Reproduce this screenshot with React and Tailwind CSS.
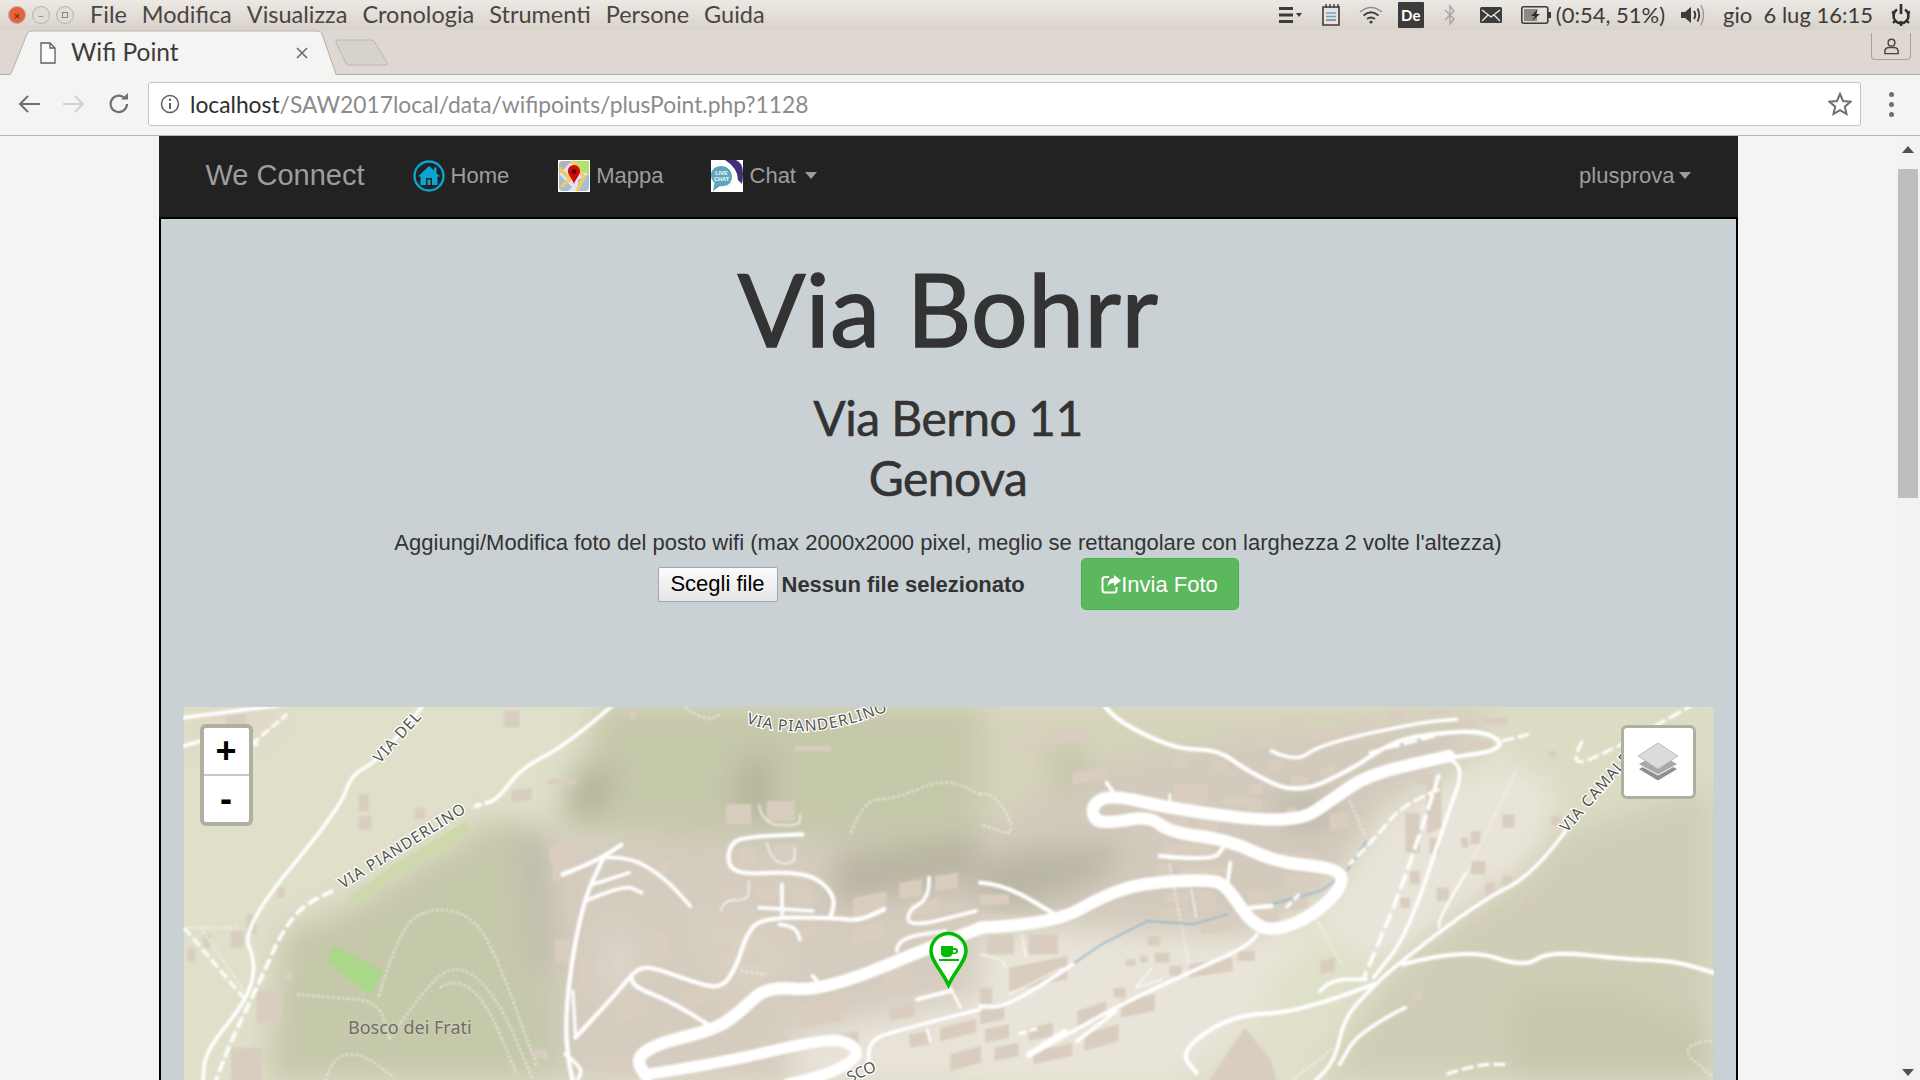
import React from 'react';

const ui = { fontFamily: 'Lato, sans-serif' };
const arial = { fontFamily: '"Liberation Sans", Arial, sans-serif' };
const comic = { fontFamily: 'Lato, sans-serif' };

// zoom-crop coordinates of the two map halves
const leftHalf = 'translate(180 700) scale(0.5102 0.33333)';
const rightHalf = 'translate(980 700) scale(0.4859 0.33333)';

const leftTerrain = [
  ['#c6c8aa', '830,0 1568,0 1568,450 1300,440 700,380 620,350 400,550 330,620 200,690 170,1140 760,1140 720,430'],
  ['#d4ccbf', '720,420 1100,400 1568,450 1568,1140 740,1140'],
  ['#b3b49a', '760,230 860,190 825,350 765,345'],
  ['#b3b49a', '1090,200 1160,140 1160,350 1090,340'],
  ['#b9b5a3', '1280,460 1568,400 1568,540 1280,620'],
  ['#bfbbac', '660,380 720,420 740,800 690,800'],
  ['#dfd8cc', '840,700 880,710 890,860 830,860'],
  ['#e8e2d8', '1200,1000 1568,880 1568,1140 1200,1140'],
  ['#d9d2c3', '1020,650 1180,700 1180,860 1080,880'],
  ['#e0d6c4', '8,60 60,20 210,20 170,110 40,160'],
];

const rightTerrain = [
  ['#dcdbc3', '1050,0 1510,0 1510,260 1190,420 1100,190'],
  ['#cfcdb5', '1200,400 1510,250 1510,1140 700,1140 850,800'],
  ['#c8c6ac', '1100,880 1300,870 1510,1000 1510,1140 1100,1140'],
  ['#d5d3ba', '0,0 1100,0 1050,60 600,100 200,200 0,400'],
  ['#d2cabd', '0,400 200,200 600,100 1050,60 1000,170 830,320 740,520 560,700 180,680 0,680'],
  ['#b9b5a4', '0,480 100,440 300,430 250,530 100,620 0,600'],
  ['#bdb9a9', '590,300 680,270 760,340 660,400'],
  ['#e9e4d9', '0,720 180,700 560,720 700,650 850,330 1100,190 1190,260 1130,500 820,790 600,930 400,1140 0,1140'],
  ['#dfe0c8', '560,900 700,680 820,790 650,920'],
  ['#c5c7a9', '140,120 210,120 220,260 150,280'],
];

const leftBuildings = [
  [1070,310,50,60,0],[1150,300,55,60,0],[1095,440,35,60,0],[1165,430,40,55,0],[1060,555,50,40,0],[1130,555,50,40,0],[1200,560,40,50,0],
  [1065,630,35,45,0],[1155,680,35,45,0],[1220,675,30,30,0],[1050,720,35,35,0],[1105,755,35,40,0],[1320,590,65,70,-20],[1410,545,45,50,-10],
  [1480,525,45,45,-10],[1320,680,60,50,-20],[1430,610,60,40,-20],[925,690,30,80,0],[730,480,40,60,-10],[735,715,30,70,0],[780,760,25,100,0],
  [860,910,55,50,-20],[980,870,50,50,-15],[1060,910,40,50,-20],[940,990,60,40,-15],[1215,910,80,70,-20],[1290,1000,40,40,-10],[1390,920,50,40,-15],
  [1480,850,45,40,-15],[1430,1000,40,40,-10],[1490,980,70,40,-25],[1510,1060,60,50,-25],[1090,1060,25,60,0],[1180,950,20,30,0],[850,1060,40,60,0],
  [725,435,60,50,-20],[1130,1020,60,50,-20],[635,30,30,50,0],[880,30,15,20,0],[720,235,55,15,0],[650,270,40,35,-10],[350,280,20,50,0],[350,345,25,40,0],
  [460,320,20,35,0],[130,640,20,60,0],[190,560,15,30,0],[100,690,25,50,0],[205,810,15,30,0],[150,870,50,100,-10],[100,1040,60,100,0],[15,740,15,40,0],
  [45,700,15,40,0],[695,1045,25,30,0],[1205,135,70,15,0],[90,40,40,60,0],[940,480,20,40,0],[1380,810,50,60,-15],
];

const rightBuildings = [
  [95,60,15,25,0],[140,90,75,40,-10],[80,125,30,30,0],[190,215,70,35,-15],[400,170,25,30,0],[480,180,30,30,0],[570,110,30,30,0],[595,180,30,25,0],
  [555,250,25,30,0],[640,225,35,30,0],[700,200,30,25,-5],[680,90,70,30,-15],[770,70,50,25,-10],[840,30,35,25,0],[920,25,50,20,0],[1035,50,50,20,0],
  [995,60,30,20,0],[985,120,70,30,-5],[400,250,70,60,0],[500,285,50,30,0],[550,295,30,30,0],[380,350,50,30,0],[450,350,40,40,0],[630,320,20,50,0],
  [720,340,40,50,-10],[380,425,100,30,5],[365,490,30,30,0],[410,495,100,30,0],[620,455,70,20,0],[630,520,70,40,0],[550,570,50,40,0],[375,625,55,40,-10],
  [380,575,50,30,0],[445,570,40,60,0],[455,650,70,50,-15],[560,630,55,40,0],[635,590,40,40,-10],[875,335,30,120,0],[920,250,30,150,-20],[925,410,20,50,0],
  [900,220,30,30,0],[885,510,20,40,0],[865,590,20,30,0],[1075,340,25,40,0],[1010,390,20,40,0],[990,410,15,30,0],[1010,480,30,40,0],[1040,545,20,40,0],
  [1075,525,20,30,0],[940,560,25,40,0],[1175,345,20,30,0],[1170,150,15,20,0],[1110,580,10,30,0],[1010,640,20,30,0],[700,780,30,40,-10],[890,870,20,30,0],
  [0,580,60,30,0],[0,640,130,20,0],[15,700,55,60,0],[100,700,60,60,0],[345,705,25,30,0],[300,775,20,20,0],[330,765,15,20,0],[360,755,30,30,0],[390,795,25,30,0],
  [430,790,90,40,-20],[530,750,35,30,0],[60,800,120,70,-35],[0,860,25,50,0],[0,930,50,40,-15],[10,985,50,40,-15],[30,1040,50,40,-15],[100,980,50,40,-15],
  [110,1050,80,40,-25],[200,930,60,50,-30],[215,1000,70,50,-30],[290,900,70,50,-20],[275,860,25,30,0],
];

// [path, width, dash?]
const leftRoads = [
  ['M850 10 L760 130 L670 200 L630 280 L612 300', 3],
  ['M612 300 L570 320', 3, '8 3'],
  ['M300 570 L250 600 L200 690 L160 830 L100 1020 L70 1140', 3, '12 4'],
  ['M478 10 L390 180 L335 220 L315 320 L120 680 L150 790 L130 900 L50 1050 L45 1140', 3],
  ['M8 50 L210 10', 3],
  ['M8 135 L100 90 L150 130', 3],
  ['M140 130 L210 40', 2.5, '10 3'],
  ['M8 680 L130 900', 2.5, '10 4'],
  ['M770 1140 L755 1050 L760 850 L790 600 L830 470', 3.5],
  ['M750 520 L810 485 L865 432', 3.5],
  ['M830 470 L880 465 L950 530 L1000 615', 3],
  ['M795 600 L870 550 L905 575', 3],
  ['M810 550 L880 515', 3],
  ['M770 870 L775 1000', 2.5],
  ['M775 1010 L860 870 L890 810 L920 795 L1000 840 L1060 865 L1090 800 L1110 700 L1140 650 L1280 650 L1330 660 L1380 625', 3.5],
  ['M755 1060 L790 1100 L780 1135', 3],
  ['M1220 400 L1100 405 L1075 440 L1075 500 L1110 520 L1190 512 L1250 530 L1285 590 L1275 650', 3.5],
  ['M1135 310 L1140 370 L1215 375 L1215 340', 1.2],
  ['M1180 550 L1180 640 M1135 620 L1240 630', 3],
  ['M1060 630 L1065 595 L1115 600 L1115 540', 1.2],
  ['M1150 425 L1160 485 L1205 490 L1205 440', 1.2],
  ['M1175 670 L1205 675 L1215 715', 3],
  ['M1568 682 L1500 720 L1260 872 L1150 855 L1100 930 L1050 985 L930 1030 L893 1075 L915 1128', 10],
  ['M915 1120 L1050 1090 L1270 1010 L1320 1030 L1330 1070 L1270 1120 L1190 1150', 9],
  ['M1240 825 L1260 860', 3],
  ['M885 830 L885 855 L960 900 L1040 975', 3.5],
  ['M1468 530 L1470 590 L1425 630 L1430 680 L1560 630', 3],
  ['M1405 750 L1405 712 L1500 690', 3],
  ['M1445 895 L1510 870', 3.5],
  ['M1510 860 L1530 920', 2],
  ['M1568 925 L1400 990 L1350 1020 L1350 1100', 3],
  ['M1465 985 L1470 1020', 2],
];

const leftTrails = [
  'M1315 395 L1340 295 L1400 295 L1500 230 L1568 280',
  'M390 885 L430 680 L490 620 L570 640 L620 760 L700 1100',
  'M410 1015 L470 880 L540 780 L620 880 L690 1130',
  'M510 860 L540 830 L600 900 L660 1120',
  'M230 880 L300 890 L390 900 L410 1015',
  'M285 1140 L300 1060 L360 1060 L420 1130',
  'M8 680 L110 680',
  'M40 680 L130 880',
  'M990 20 L1030 60 L1060 40',
  'M1100 810 L1150 820',
];

const rightRoads = [
  ['M255 10 L270 50 L400 145 L490 145 L550 210 L650 280 L760 210 L850 120 L940 95 L1030 90 L1075 120 L1060 150 L970 170', 3.5],
  ['M0 680 L150 670 L260 580 L340 545 L480 535 L510 560 L560 670 L610 690 L690 640 L750 550 L735 500 L610 485 L510 415 L390 395 L350 345 L270 365 L235 360 L230 310 L270 280 L400 325 L650 370 L730 290 L800 220 L965 165', 10],
  ['M370 465 L480 480 L500 440', 3.5],
  ['M515 485 L510 545', 3],
  ['M260 245 L275 275', 3],
  ['M390 280 L392 310', 2],
  ['M0 545 L50 550 L160 645', 3.5],
  ['M545 622 L600 615', 3.5],
  ['M570 700 L560 730 L430 815 L290 910 L100 1065', 3],
  ['M190 790 L60 920 L0 915', 3],
  ['M965 175 L1000 190 L960 350 L880 700 L810 830', 3],
  ['M1205 390 L1140 520 L1030 600 L850 800 L800 870 L750 950 L730 1080 L690 1140', 3],
  ['M870 790 L1000 740 L1120 800 L1170 750 L1330 775 L1430 780 L1510 815', 3.5],
  ['M810 850 L660 935 L520 940 L410 1050 L445 1115', 3.5],
  ['M700 870 L720 835 L795 835', 3],
  ['M1000 515 L945 650 L945 680', 2],
  ['M875 920 L780 990 L740 1090', 3],
  ['M600 150 L650 185 L700 130 L900 65 L980 55', 3],
  ['M100 1060 L175 990', 4],
  ['M200 1020 L280 930', 3],
  ['M320 860 L355 800 M320 860 L375 835', 1.2],
  ['M60 880 L170 800', 1.2],
  ['M85 700 L95 770 M0 760 L50 775 L50 800', 1.2],
  ['M435 565 L445 650', 1.2],
];

const rightDashed = [
  ['M945 265 L870 310 L820 400 L760 490', 2.5, '12 4'],
  ['M945 220 L880 520 L790 830', 3, '16 5'],
  ['M800 155 L950 100', 2.5, '14 4'],
  ['M1075 120 L1130 100', 2.5, '12 4'],
  ['M1240 120 L1205 210 L1320 130', 2.5, '12 4'],
  ['M1320 130 L1470 10', 2.5, '14 4'],
  ['M630 620 L660 575', 2.5, '8 3'],
  ['M960 1120 L1020 1090 L1090 1090', 2.5, '12 4'],
  ['M80 1000 L120 980', 2.5, '8 3'],
];

const rightTrails = [
  'M1105 205 L1000 520',
  'M760 300 L795 410',
  'M690 650 L745 790',
  'M1505 1020 L1430 1030 L1510 1130',
  'M0 280 L30 270 L80 410 L0 370',
  'M390 490 L430 790',
  'M640 1140 L730 1040',
];

const blue = ['M795 420 L755 510', 'M735 535 L700 570 L600 610', 'M510 640 L440 670 L345 660 L250 730 L190 790'];

// rounds the corners of a traced polyline
function smooth(d) {
  return d.split('M').filter(Boolean).map((part) => {
    const n = part.replace(/L/g, ' ').trim().split(/\s+/).map(Number);
    const pts = [];
    for (let i = 0; i < n.length; i += 2) pts.push([n[i], n[i + 1]]);
    let out = `M${pts[0][0]} ${pts[0][1]}`;
    for (let i = 1; i < pts.length - 1; i++) {
      const mx = (pts[i][0] + pts[i + 1][0]) / 2;
      const my = (pts[i][1] + pts[i + 1][1]) / 2;
      out += ` Q${pts[i][0]} ${pts[i][1]} ${mx} ${my}`;
    }
    const last = pts[pts.length - 1];
    return `${out} L${last[0]} ${last[1]}`;
  }).join(' ');
}

function Buildings({ list }) {
  return list.map(([x, y, w, h, d], i) => (
    <polygon key={i} points={`${x},${y} ${x + w},${y + d} ${x + w},${y + d + h} ${x},${y + h}`} fill="#d9cdbf" />
  ));
}

function Roads({ list }) {
  return list.map(([d, w, dash], i) => (
    <path key={i} d={smooth(d)} fill="none" stroke="#fff" strokeWidth={w > 1.5 ? w * 1.25 : w} strokeDasharray={dash} strokeLinejoin="round" strokeLinecap={dash ? 'butt' : 'round'} vectorEffect="non-scaling-stroke" />
  ));
}

function Trails({ list }) {
  return list.map((d, i) => (
    <path key={i} d={smooth(d)} fill="none" stroke="#fff" strokeWidth="1.7" strokeDasharray="2 3" vectorEffect="non-scaling-stroke" />
  ));
}

function MapArt() {
  const label = { fontFamily: '"Noto Sans", sans-serif', fill: '#55564f', stroke: '#fff', strokeWidth: 2.5, paintOrder: 'stroke' };
  return (
    <svg viewBox="184 706 1529 374" className="block w-full h-full">
      <defs>
        <filter id="soft" x="-10%" y="-10%" width="120%" height="120%"><feGaussianBlur stdDeviation="14" /></filter>
        <filter id="tile" x="-2%" y="-2%" width="104%" height="104%"><feGaussianBlur stdDeviation="0.9" /></filter>
        <path id="topLabel" d="M746 722 Q810 744 892 708" />
      </defs>
      <rect x="184" y="706" width="1529" height="374" fill="#dfdfca" />
      <g filter="url(#soft)">
        <g transform={leftHalf}>{leftTerrain.map(([c, p], i) => <polygon key={i} points={p} fill={c} />)}</g>
        <g transform={rightHalf}>{rightTerrain.map(([c, p], i) => <polygon key={i} points={p} fill={c} />)}</g>
      </g>
      <g filter="url(#tile)">
        <g transform={leftHalf}>
          <polygon points="330,590 420,490 560,360 570,400 430,520 350,610" fill="#cdd8ab" />
          <polygon points="300,735 398,810 374,882 289,783" fill="#a8d888" />
          <Buildings list={leftBuildings} />
          <Trails list={leftTrails} />
          <Roads list={leftRoads} />
        </g>
        <g transform={rightHalf}>
          <Buildings list={rightBuildings} />
          <polygon points="470,1140 545,980 600,1080 610,1140" fill="#d9cdbf" />
          <Trails list={rightTrails} />
          {blue.map((d) => <path key={d} d={d} fill="none" stroke="#8db4cc" strokeWidth="1.5" vectorEffect="non-scaling-stroke" />)}
          <Roads list={rightRoads} />
          <Roads list={rightDashed} />
        </g>
      </g>
      <text x="0" y="0" fontSize="15.5" letterSpacing="1" style={label} transform="translate(343 888) rotate(-32)">VIA PIANDERLINO</text>
      <text x="0" y="0" fontSize="15.5" letterSpacing="1" style={label} transform="translate(380 763) rotate(-48)">VIA DEL</text>
      <text fontSize="15.5" letterSpacing="1" style={label}><textPath href="#topLabel">VIA PIANDERLINO</textPath></text>
      <text x="0" y="0" fontSize="15.5" letterSpacing="1" style={label} transform="translate(1567 832) rotate(-49)">VIA CAMALDOLI</text>
      <text x="0" y="0" fontSize="15.5" style={label} transform="translate(850 1082) rotate(-25)">SCO</text>
      <text x="348" y="1033" fontSize="18" style={{ ...label, fill: '#6e6e66', strokeWidth: 2, stroke: '#cfd0b8' }}>Bosco dei Frati</text>
      <path d="M948.5 984 C942 970 931 960 931 950 A17.5 17.5 0 0 1 966 950 C966 960 955 970 948.5 984Z" fill="#fff" stroke="#00bb00" strokeWidth="3.5" />
      <path d="M941 945 H953 V947 H955 Q958 947 958 950 Q958 953 955 953 H952.5 Q951 956 949 956 H945 Q942 956 941 953Z M953 949 V951.5 H955 Q956 951.5 956 950 Q956 949 955 949Z" fill="#00bb00" fillRule="evenodd" />
      <rect x="939" y="958" width="20" height="2" fill="#00bb00" />
    </svg>
  );
}

function HomeIcon() {
  return (
    <svg viewBox="0 0 32 32" className="w-[32px] h-[32px]">
      <circle cx="16" cy="16" r="14.5" fill="none" stroke="#0aa5d3" strokeWidth="2.4" />
      <path d="M16 6 L21 10.5 V7.5 H23.5 V13 L27 16.5 H24.5 V25 H7.5 V16.5 H5Z" fill="#0aa5d3" />
      <rect x="13" y="18" width="6" height="7" fill="#1f1f1f" />
      <rect x="14.5" y="19.5" width="3" height="5.5" fill="#0aa5d3" />
    </svg>
  );
}

function MapIcon() {
  return (
    <svg viewBox="0 0 32 32" className="w-[32px] h-[32px]">
      <rect width="32" height="32" fill="#fff" />
      <rect x="1" y="1" width="30" height="30" rx="4" fill="#e4e5e8" />
      <path d="M1 5 Q1 1 5 1 H14 L1 14Z" fill="#b3b3b3" />
      <path d="M16 1 H31 V14 L24 12Z" fill="#b5e06a" />
      <path d="M1 14 L14 27 L10 31 H5 Q1 31 1 27Z M20 20 L31 14 V27 Q31 31 27 31 H20Z" fill="#a3bfd3" />
      <path d="M1 8 L12 19 L3 27 M14 1 L26 17 L19 31" fill="none" stroke="#f3c867" strokeWidth="3.5" />
      <path d="M16 5 C11.5 5 9.5 9 10 12 C10.7 16 15 20 16 24 C17 20 21.3 16 22 12 C22.5 9 20.5 5 16 5Z" fill="#cf0a0a" />
      <circle cx="16" cy="11.5" r="2.2" fill="#5a0000" />
    </svg>
  );
}

function ChatIcon() {
  return (
    <svg viewBox="0 0 32 32" className="w-[32px] h-[32px]">
      <rect width="32" height="32" fill="#fff" />
      <path d="M14 0 H25 Q32 3 32 13 Q32 19 31 24 L27 20 Q27 8 14 0Z" fill="#3f3079" />
      <path d="M10 6 C16 6 21 10 21 17 C21 24 15 27 9 26 L2 31 L3.5 23 C0.5 20 0 17 0 15 C0 10 4 6 10 6Z" fill="#5fa6bd" />
      <text x="10.5" y="14.5" textAnchor="middle" fontSize="5.6" fontWeight="700" fill="#fff" style={arial}>LIVE</text>
      <text x="10.5" y="21" textAnchor="middle" fontSize="5.6" fontWeight="700" fill="#fff" style={arial}>CHAT</text>
    </svg>
  );
}

function Caret() {
  return <span className="inline-block w-0 h-0 border-l-[6px] border-r-[6px] border-t-[7px] border-l-transparent border-r-transparent border-t-[#9d9d9d]" />;
}

function Dot({ color, children }) {
  return (
    <span className="w-[18px] h-[18px] rounded-full border border-[#b9b3ab] flex items-center justify-center text-[11px] leading-none" style={{ background: color }}>
      {children}
    </span>
  );
}

function StatusIcons() {
  return (
    <div className="flex items-center text-[#3c3c3c]">
      <svg viewBox="0 0 23 18" className="w-[23px] h-[18px]" fill="#3c3c3c">
        <rect y="1" width="14" height="3" /><rect y="7.5" width="14" height="3" /><rect y="14" width="14" height="3" /><path d="M17 7 H23 L20 11Z" />
      </svg>
      <svg viewBox="0 0 22 24" className="w-[22px] h-[24px] ml-[18px]" fill="none">
        <path d="M3 4 H19 V22 H3Z" fill="#e8e4dd" stroke="#3c3c3c" strokeWidth="1.6" />
        <path d="M6 1 V5 M10 1 V5 M14 1 V5 M18 1 V5" stroke="#3c3c3c" strokeWidth="1.4" />
        <path d="M6 10 H16 M6 13.5 H16" stroke="#5fa8cf" strokeWidth="1.6" />
        <path d="M6 17 H16" stroke="#777" strokeWidth="1.4" />
      </svg>
      <svg viewBox="0 0 24 18" className="w-[24px] h-[18px] ml-[17px]" fill="none" stroke="#3c3c3c">
        <path d="M1 6 Q12 -3 23 6" strokeWidth="1.4" stroke="#8c8c8c" />
        <path d="M4.5 9.5 Q12 3 19.5 9.5" strokeWidth="1.8" />
        <path d="M8 13 Q12 10 16 13" strokeWidth="1.8" />
        <circle cx="12" cy="16" r="1.6" fill="#3c3c3c" stroke="none" />
      </svg>
      <span className="ml-[15px] w-[26px] h-[26px] bg-[#3b3b3b] text-white text-[15px] font-bold flex items-center justify-center rounded-[1px]">De</span>
      <svg viewBox="0 0 12 24" className="w-[12px] h-[24px] ml-[20px]" fill="none" stroke="#a8a4a0" strokeWidth="1.4">
        <path d="M1 7 L10 16 L6 21 V3 L10 8 L1 17" />
      </svg>
      <svg viewBox="0 0 22 16" className="w-[22px] h-[16px] ml-[24px]">
        <rect width="22" height="16" rx="1.5" fill="#3c3c3c" />
        <path d="M2 3 L11 10 L20 3 M2 14 L8 8 M20 14 L14 8" fill="none" stroke="#eee" strokeWidth="1.3" />
      </svg>
      <svg viewBox="0 0 30 18" className="w-[30px] h-[18px] ml-[19px]">
        <rect x="0.8" y="0.8" width="26" height="16.4" rx="2" fill="none" stroke="#3c3c3c" strokeWidth="1.6" />
        <rect x="27" y="6" width="3" height="6" fill="#3c3c3c" />
        <rect x="3" y="3" width="13" height="12" fill="#8d8a86" />
        <path d="M17 3 L10 10 H14 L11 15 L19 8 H15Z" fill="#2c2c2c" />
      </svg>
      <span className="ml-[5px] text-[22px] leading-none">(0:54, 51%)</span>
      <svg viewBox="0 0 26 24" className="w-[26px] h-[24px] ml-[15px]" fill="none">
        <path d="M1 9 H5 L11 4 V20 L5 15 H1Z" fill="#3c3c3c" />
        <path d="M14 8 Q16.5 12 14 16" stroke="#3c3c3c" strokeWidth="2" />
        <path d="M17.5 5.5 Q21 12 17.5 18.5" stroke="#3c3c3c" strokeWidth="1.8" />
        <path d="M21 2 Q26 12 21 22" stroke="#9a9692" strokeWidth="1.4" />
      </svg>
      <span className="ml-[17px] text-[22px] leading-none whitespace-pre">gio  6 lug 16:15</span>
      <svg viewBox="0 0 22 24" className="w-[22px] h-[24px] ml-[17px]" fill="none" stroke="#2e2e2e" strokeWidth="2.6">
        <path d="M7 6.5 A7.5 7.5 0 1 0 15 6.5" />
        <path d="M11 1 V11" />
        <path d="M11 18 V23 M2 9 L5 10 M20 9 L17 10 M3 20 L6 17 M19 20 L16 17" strokeWidth="2.4" />
      </svg>
    </div>
  );
}

function MenuBar() {
  return (
    <div className="h-[30px] flex items-center bg-gradient-to-b from-[#ece9e4] to-[#d9d2cb] text-[#4a4540]" style={ui}>
      <div className="flex items-center gap-[6px] pl-[8px] w-[90px]">
        <Dot color="#e7623a"><span className="text-[#7a2a10] font-bold">×</span></Dot>
        <Dot color="#e0dcd6"><span className="text-[#8b8680]">–</span></Dot>
        <Dot color="#e0dcd6"><span className="block w-[6px] h-[6px] border border-[#8b8680]" /></Dot>
      </div>
      <div className="flex items-center gap-[15px] text-[23.5px] leading-none">
        {['File', 'Modifica', 'Visualizza', 'Cronologia', 'Strumenti', 'Persone', 'Guida'].map((m) => (
          <span key={m}>{m}</span>
        ))}
      </div>
      <div className="ml-auto pr-[8px]"><StatusIcons /></div>
    </div>
  );
}

function TabStrip() {
  return (
    <div className="h-[45px] flex items-end bg-[#dfd7d1] border-b border-[#b5aeaa] relative">
      <div className="relative w-[330px] h-[45px] ml-[8px] -mb-px">
        <svg viewBox="0 0 330 45" className="absolute inset-0 w-full h-full">
          <path d="M0 45 Q3 45 5 39 L19 4 Q20 1 24 1 H310 Q313 1 314 4 L328 44 L330 45Z" fill="#f4f4f2" stroke="#b5aeaa" strokeWidth="1" />
          <rect x="3" y="44" width="324" height="2" fill="#f4f4f2" />
        </svg>
        <div className="relative h-full flex items-center pl-[32px] pr-[30px]">
          <svg viewBox="0 0 16 22" className="w-[16px] h-[22px]" fill="#fbfbfa" stroke="#5d5d5d" strokeWidth="1.3">
            <path d="M1 1 H10 L15 6 V21 H1Z" /><path d="M10 1 V6 H15" fill="none" />
          </svg>
          <span className="ml-[15px] text-[24.5px] leading-none text-[#3d3d3d]" style={ui}>Wifi Point</span>
          <svg viewBox="0 0 12 12" className="ml-auto w-[12px] h-[12px]" stroke="#666" strokeWidth="1.5">
            <path d="M1 1 L11 11 M11 1 L1 11" />
          </svg>
        </div>
      </div>
      <svg viewBox="0 0 54 27" className="w-[54px] h-[27px] mb-[8px] -ml-[3px]">
        <path d="M3 1 H36 Q39 1 40 4 L52 23 Q53 26 50 26 H14 Q12 26 11 24 L1 4 Q0 1 3 1Z" fill="#d6d2cc" stroke="#bcb6b0" />
      </svg>
      <div className="ml-auto mr-[9px] mb-[14px] w-[40px] h-[27px] border border-t-0 border-[#a9a39e] rounded-b-[4px] flex items-center justify-center">
        <svg viewBox="0 0 18 18" className="w-[17px] h-[17px]" fill="none" stroke="#444" strokeWidth="1.5">
          <circle cx="9" cy="5" r="3.6" /><path d="M2 16.5 V14 Q2 10.5 6 10 H12 Q16 10.5 16 14 V16.5Z" />
        </svg>
      </div>
    </div>
  );
}

function Toolbar() {
  return (
    <div className="h-[61px] flex items-center bg-[#f4f4f2] border-b border-[#b4b4b4] pb-[2px]">
      <div className="w-[148px] flex items-center pl-[18px]">
        <svg viewBox="0 0 22 20" className="w-[22px] h-[20px]" fill="none" stroke="#6f6f6f" strokeWidth="2"><path d="M22 10 H2 M10 2 L2 10 L10 18" /></svg>
        <svg viewBox="0 0 22 20" className="w-[22px] h-[20px] ml-[23px]" fill="none" stroke="#d3d3d3" strokeWidth="2"><path d="M0 10 H20 M12 2 L20 10 L12 18" /></svg>
        <svg viewBox="0 0 22 22" className="w-[22px] h-[22px] ml-[23px]" fill="none" stroke="#6f6f6f" strokeWidth="2.2">
          <path d="M19 11 A8.2 8.2 0 1 1 16.5 5" /><path d="M13 6.5 H20 V0" fill="#6f6f6f" stroke="none" />
        </svg>
      </div>
      <div className="flex-1 h-[44px] mr-[59px] bg-white border border-[#c4c4c4] rounded-[3px] flex items-center">
        <svg viewBox="0 0 20 20" className="w-[20px] h-[20px] ml-[11px]" fill="none" stroke="#5e5e5e" strokeWidth="1.5">
          <circle cx="10" cy="10" r="8.5" /><path d="M10 9 V15" strokeWidth="2" /><circle cx="10" cy="5.8" r="1.2" fill="#5e5e5e" stroke="none" />
        </svg>
        <span className="ml-[10px] text-[22.8px] leading-none text-[#8b8b8b]" style={ui}><span className="text-[#2d2d2d]">localhost</span>/SAW2017local/data/wifipoints/plusPoint.php?1128</span>
        <svg viewBox="0 0 24 24" className="ml-auto mr-[8px] w-[24px] h-[24px]" fill="none" stroke="#6f6f6f" strokeWidth="2">
          <path d="M12 2 L15 9 L22.5 9.7 L16.8 14.7 L18.5 22 L12 18.2 L5.5 22 L7.2 14.7 L1.5 9.7 L9 9Z" />
        </svg>
      </div>
      <div className="absolute left-[1889px] flex flex-col gap-[5px]">
        <span className="w-[5px] h-[5px] rounded-full bg-[#6f6f6f]" />
        <span className="w-[5px] h-[5px] rounded-full bg-[#6f6f6f]" />
        <span className="w-[5px] h-[5px] rounded-full bg-[#6f6f6f]" />
      </div>
    </div>
  );
}

function Navbar() {
  return (
    <div className="h-[83px] bg-[#222222] border-b-2 border-black flex items-center pl-[47px] pr-[47px] pb-[2px] text-[#9d9d9d] text-[22px]" style={arial}>
      <span className="text-[29px] leading-none">We Connect</span>
      <span className="ml-[48px] flex items-center gap-[6px]"><HomeIcon />Home</span>
      <span className="ml-[49px] flex items-center gap-[6px]"><MapIcon />Mappa</span>
      <span className="ml-[47px] flex items-center gap-[7px]"><ChatIcon />Chat<span className="ml-[2px] flex"><Caret /></span></span>
      <span className="ml-auto flex items-center gap-[4px]">plusprova<Caret /></span>
    </div>
  );
}

function MainContent() {
  return (
    <div className="flex-1 min-h-0 bg-[#c9d1d5] border-x-2 border-black px-[22px] text-[#333333] flex flex-col">
      <h1 className="mt-[28px] h-[122px] text-[100px] leading-[122px] text-center tracking-[0.5px] [-webkit-text-stroke:1.5px_#333333]" style={comic}>Via Bohrr</h1>
      <h2 className="mt-[19px] text-[48px] leading-[60px] text-center tracking-[-0.5px] [-webkit-text-stroke:0.6px_#333333]" style={comic}>Via Berno 11</h2>
      <h2 className="text-[48px] leading-[60px] text-center tracking-[-0.5px] [-webkit-text-stroke:0.6px_#333333]" style={comic}>Genova</h2>
      <p className="mt-[20px] text-[22px] leading-[30px] text-center" style={arial}>Aggiungi/Modifica foto del posto wifi (max 2000x2000 pixel, meglio se rettangolare con larghezza 2 volte l'altezza)</p>
      <div className="flex items-center justify-center" style={arial}>
        <button className="w-[120px] h-[35px] bg-gradient-to-b from-[#fbfbfb] to-[#e6e6e6] border border-[#a6a6a6] rounded-[2px] text-[22px] leading-none text-black">Scegli file</button>
        <span className="ml-[4px] w-[299px] text-[22px] font-bold">Nessun file selezionato</span>
        <button className="w-[158px] h-[52px] bg-[#5cb85c] border border-[#4cae4c] rounded-[5px] text-white text-[22px] flex items-center justify-center">
          <svg viewBox="0 0 20 20" className="w-[20px] h-[20px]" fill="none" stroke="#fff" strokeWidth="2">
            <path d="M8 3 H4 Q1.5 3 1.5 5.5 V16 Q1.5 18.5 4 18.5 H13 Q15.5 18.5 15.5 16 V13" />
            <path d="M13 1 L20 6.5 L13 12 V9 Q8 9 6.5 13 Q6.5 4.5 13 4Z" fill="#fff" stroke="none" />
          </svg>
          Invia Foto
        </button>
      </div>
      <div className="relative mt-[97px] h-[374px] flex-none overflow-hidden">
        <MapArt />
        <div className="absolute left-[17px] top-[17px] w-[53px] h-[102px] border-[4px] border-[#b0b0a2] rounded-[6px] bg-white text-black font-bold" style={arial}>
          <div className="h-[48px] flex items-center justify-center text-[36px] leading-none border-b-2 border-[#c8c8c8]">+</div>
          <div className="h-[46px] flex items-center justify-center text-[36px] leading-none">-</div>
        </div>
        <div className="absolute right-[18px] top-[18px] w-[75px] h-[74px] border-[3px] border-[#b0b0a2] rounded-[6px] bg-white flex items-center justify-center">
          <svg viewBox="0 0 44 44" className="w-[44px] h-[44px]">
            <path d="M22 19 L42 29 L22 41 L2 29Z" fill="#8f8f8f" stroke="#fff" />
            <path d="M22 13 L42 24 L22 35 L2 24Z" fill="#a9a9a9" stroke="#fff" />
            <path d="M22 3 L42 16 L22 29 L2 16Z" fill="#dcdcdc" stroke="#bdbdbd" />
          </svg>
        </div>
      </div>
    </div>
  );
}

function Scrollbar() {
  return (
    <div className="w-[24px] flex-none bg-[#f2f2f2] flex flex-col items-center">
      <span className="mt-[10px] w-0 h-0 border-l-[6px] border-r-[6px] border-b-[7px] border-l-transparent border-r-transparent border-b-[#505050]" />
      <div className="mt-[16px] w-[20px] h-[329px] bg-[#bebebe]" />
      <span className="mt-auto mb-[4px] w-0 h-0 border-l-[6px] border-r-[6px] border-t-[7px] border-l-transparent border-r-transparent border-t-[#505050]" />
    </div>
  );
}

export default function App() {
  return (
    <div className="w-[1920px] h-[1080px] overflow-hidden flex flex-col bg-[#f4f4f4]">
      <MenuBar />
      <TabStrip />
      <Toolbar />
      <div className="flex-1 min-h-0 flex">
        <div className="flex-1 min-w-0 flex justify-center">
          <div className="w-[1579px] flex flex-col">
            <Navbar />
            <MainContent />
          </div>
        </div>
        <Scrollbar />
      </div>
    </div>
  );
}
